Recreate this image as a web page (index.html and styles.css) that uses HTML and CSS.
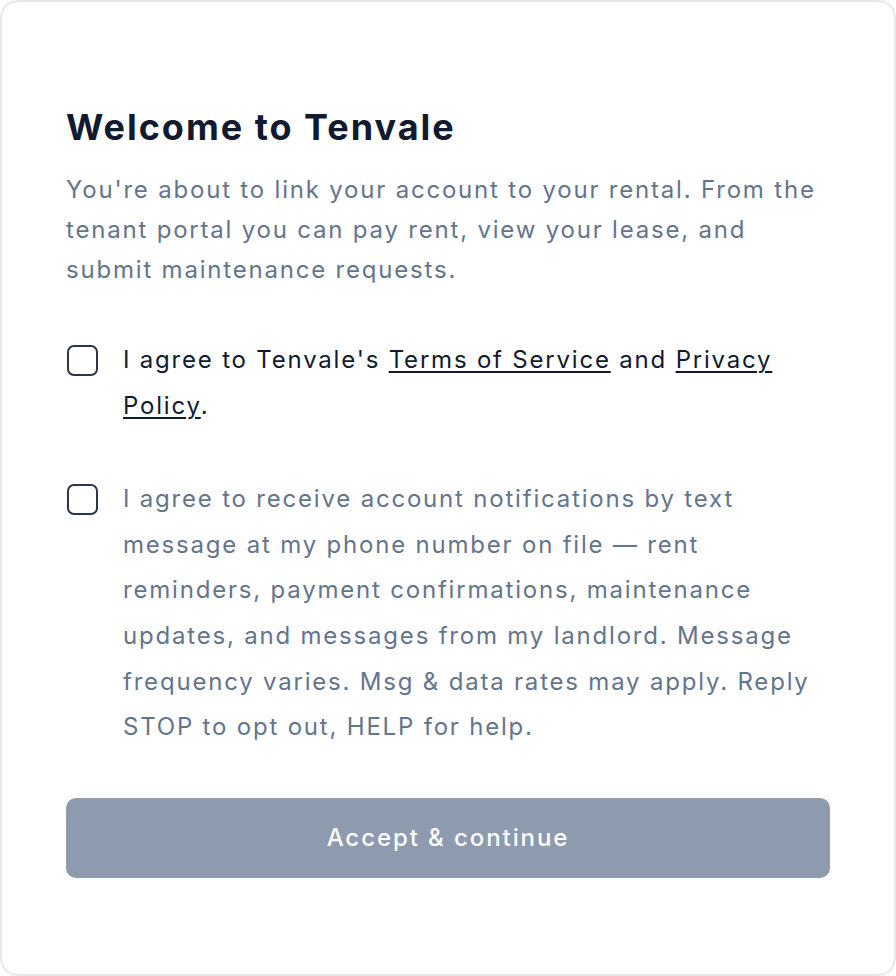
FILE: index.html
```html
<!DOCTYPE html>
<html lang="en">
<head>
    <meta charset="UTF-8">
    <meta name="viewport" content="width=device-width, initial-scale=1.0">
    <title>Tenvale - Welcome</title>
    <link rel="stylesheet" href="styles.css">
</head>
<body>
    <div class="card">
        <h1>Welcome to Tenvale</h1>
        <p class="intro">You're about to link your account to your rental. From the tenant portal you can pay rent, view your lease, and submit maintenance requests.</p>

        <label class="consent consent-terms">
            <input type="checkbox" id="terms">
            <span>I agree to Tenvale's <a href="#">Terms of Service</a> and <a href="#">Privacy Policy</a>.</span>
        </label>

        <label class="consent consent-sms">
            <input type="checkbox" id="sms">
            <span>I agree to receive account notifications by text message at my phone number on file — rent reminders, payment confirmations, maintenance updates, and messages from my landlord. Message frequency varies. Msg &amp; data rates may apply. Reply STOP to opt out, HELP for help.</span>
        </label>

        <button type="button" class="accept" disabled>Accept &amp; continue</button>
    </div>
</body>
</html>
```

FILE: styles.css
```css
* {
    margin: 0;
    padding: 0;
    box-sizing: border-box;
    font-family: Inter, "Noto Sans", sans-serif;
}

body {
    background: #ffffff;
}

.card {
    width: 896px;
    height: 976px;
    background: white;
    border: 2px solid #e7e8ec;
    border-radius: 18px;
    padding: 103px 64px 0 64px;
}

h1 {
    color: #111a2e;
    font-size: 36px;
    font-weight: 700;
    line-height: 44px;
    letter-spacing: 0.055em;
    margin-bottom: 21px;
}

.intro {
    color: #64748b;
    font-size: 24px;
    line-height: 40px;
    letter-spacing: 0.075em;
    margin-bottom: 47px;
}

.consent {
    display: flex;
    align-items: flex-start;
    gap: 25px;
    font-size: 24px;
    line-height: 45.6px;
    letter-spacing: 0.075em;
    margin-bottom: 48px;
    cursor: pointer;
}

.consent-terms {
    color: #111a2e;
}

.consent-sms {
    color: #64748b;
}

.consent a {
    color: #111a2e;
    text-decoration: underline;
    text-decoration-thickness: 2px;
    text-underline-offset: 3px;
}

.consent input {
    appearance: none;
    flex: none;
    width: 31px;
    height: 31px;
    margin-top: 8px;
    margin-left: 1px;
    border: 2px solid #2b3648;
    border-radius: 7px;
    background: white;
}

.accept {
    display: block;
    width: 100%;
    height: 80px;
    border: none;
    border-radius: 10px;
    background: #8e9aad;
    color: white;
    font-size: 24px;
    font-weight: 500;
    letter-spacing: 0.08em;
}
```
